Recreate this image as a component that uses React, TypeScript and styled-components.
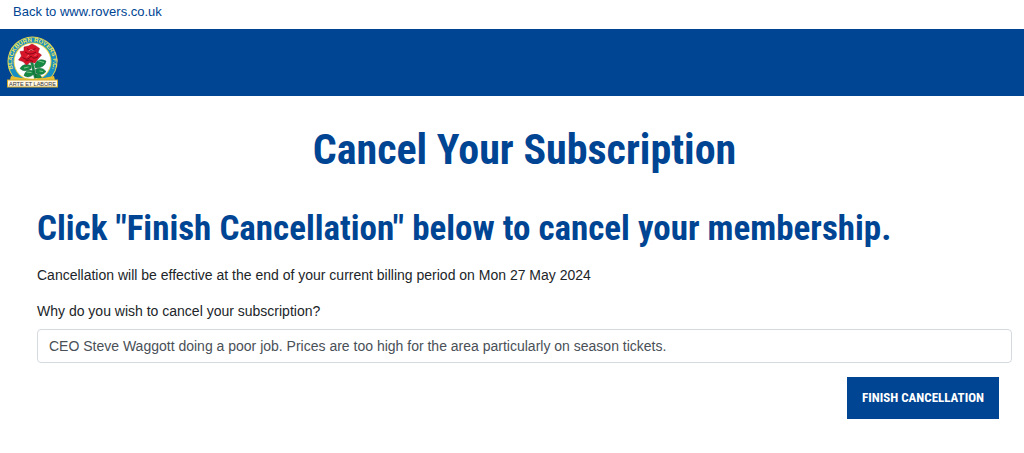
import React from "react";
import styled, { createGlobalStyle } from "styled-components";

const navy = "#004593";
const condensed = `"Roboto Condensed", "Arial Narrow", "Liberation Sans", sans-serif`;

const GlobalStyle = createGlobalStyle`
  *, *::before, *::after { box-sizing: border-box; }
  body {
    margin: 0;
    background: #fff;
    color: #212529;
    font: 14px/20px "Liberation Sans", Arial, sans-serif;
  }
`;

const TopBar = styled.nav`
  display: flex;
  padding: 2px 13px 7px;
`;

const BackLink = styled.a`
  color: ${navy};
  font-size: 13px;
  text-decoration: none;
`;

const Header = styled.header`
  display: flex;
  padding: 7px 7px 6px;
  background: ${navy};
`;

const CrestLink = styled.a`
  display: block;
  height: 54px;
`;

const Main = styled.main`
  padding: 28px 12px 32px 37px;
`;

const Title = styled.h1`
  margin: 0;
  color: ${navy};
  font: bold 42px/52px ${condensed};
  text-align: center;
`;

const Subtitle = styled.h2`
  margin: 31px 0 0;
  color: ${navy};
  font: bold 35px/44px ${condensed};
`;

const Notice = styled.p`
  margin: 14px 0 16px;
`;

const Form = styled.form`
  display: flex;
  flex-direction: column;
`;

const Label = styled.label`
  margin-bottom: 8px;
`;

const ReasonInput = styled.input`
  width: 100%;
  height: 34px;
  padding: 0 11px;
  border: 1px solid #d5dae0;
  border-radius: 4px;
  background: #fff;
  color: #495057;
  font: inherit;
`;

const SubmitButton = styled.button`
  align-self: flex-end;
  height: 42px;
  margin: 14px 13px 0 0;
  padding: 0 15px;
  border: 0;
  background: ${navy};
  color: #fff;
  font: bold 13px/20px ${condensed};
  text-transform: uppercase;
`;

function Crest() {
  return (
    <svg width="51" height="54" viewBox="0 0 102 108" role="img" aria-label="Blackburn Rovers F.C.">
      <defs>
        <path id="ring" d="M20.5 80 A41 41 0 1 1 81.5 80" />
      </defs>
      <circle cx="51" cy="51" r="50" fill="#e8d44a" />
      <circle cx="51" cy="51" r="48" fill="#168fc4" />
      <circle cx="51" cy="51" r="38" fill="#e8d44a" />
      <circle cx="51" cy="51" r="36" fill="#fff" />
      <text fill="#f2e55c" fontFamily="Liberation Sans, sans-serif" fontWeight="bold" fontSize="12">
        <textPath href="#ring" startOffset="50%" textAnchor="middle">BLACKBURN ROVERS F.C.</textPath>
      </text>
      <g fill="#168a43" stroke="#0b5a2c" strokeWidth="1">
        <path d="M47 52 L52 53 L59 84 L55 85Z" />
        <path d="M48 59 Q33 53 26 65 Q35 74 48 65Z" />
        <path d="M53 70 Q38 65 34 79 Q43 86 54 76Z" />
        <path d="M55 58 Q62 42 78 50 Q76 64 57 64Z" />
        <path d="M57 67 Q69 60 78 71 Q70 81 58 74Z" />
        <path d="M57 76 Q67 75 69 83 Q63 87 58 83Z" />
      </g>
      <path d="M26 31 L34 30 L34 22 L43 20 L50 16 L58 20 L65 25 L62 33 L69 38 L62 46 L56 54 L47 52 L39 58 L32 51 L23 48 L29 40Z" fill="#d81428" stroke="#9b0c1d" strokeWidth="1" />
      <path d="M36 32 Q45 40 58 32 M40 25 Q47 33 57 25 M31 43 Q42 51 48 40 Q53 48 62 41 M37 50 Q45 45 52 51" fill="none" stroke="#83091a" strokeWidth="2" />
      <path d="M43 30 Q48 25 53 29 M39 42 L44 38 M55 39 L59 37" fill="none" stroke="#f36a70" strokeWidth="2" />
      <path d="M61 49 L74 53 M39 72 L49 73 M65 70 L72 71 M34 64 L43 62" fill="none" stroke="#7cc58d" strokeWidth="2" />
      <path d="M8 80 Q51 91 94 80 L96 88 H6Z" fill="#e8bf31" />
      <rect x="1" y="88" width="100" height="14" fill="#fff7e4" stroke="#cfa82b" strokeWidth="2" />
      <text x="51" y="99" textAnchor="middle" fill="#353535" fontFamily="Liberation Sans, sans-serif" fontSize="11">ARTE ET LABORE</text>
    </svg>
  );
}

export default function App() {
  return (
    <>
      <GlobalStyle />
      <TopBar>
        <BackLink href="#home">Back to www.rovers.co.uk</BackLink>
      </TopBar>
      <Header>
        <CrestLink href="#home"><Crest /></CrestLink>
      </Header>
      <Main>
        <Title>Cancel Your Subscription</Title>
        <Subtitle>Click "Finish Cancellation" below to cancel your membership.</Subtitle>
        <Notice>Cancellation will be effective at the end of your current billing period on Mon 27 May 2024</Notice>
        <Form onSubmit={(event) => event.preventDefault()}>
          <Label htmlFor="reason">Why do you wish to cancel your subscription?</Label>
          <ReasonInput
            id="reason"
            type="text"
            defaultValue="CEO Steve Waggott doing a poor job. Prices are too high for the area particularly on season tickets."
          />
          <SubmitButton type="submit">Finish Cancellation</SubmitButton>
        </Form>
      </Main>
    </>
  );
}
